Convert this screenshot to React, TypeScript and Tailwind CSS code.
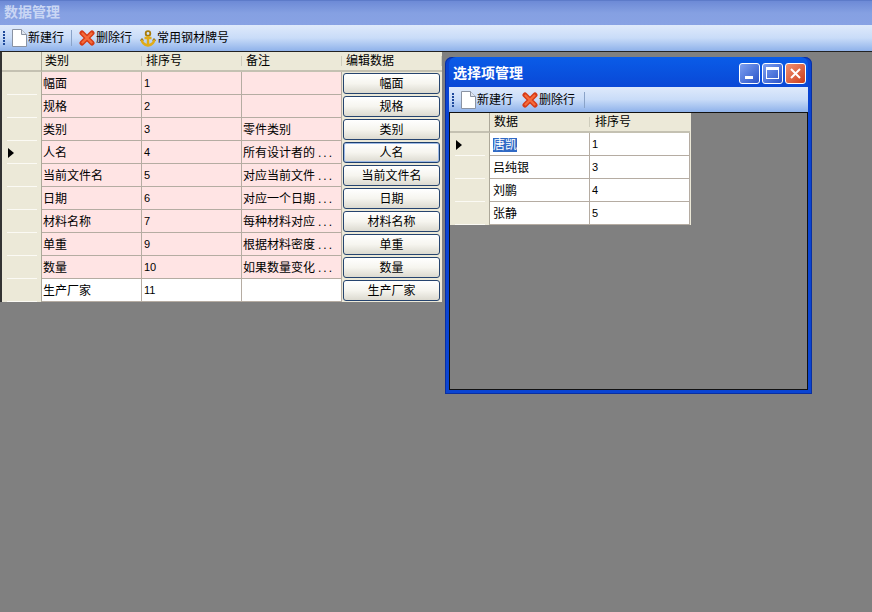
const FONT = "font-['Liberation_Sans','Noto_Sans_CJK_SC',sans-serif]";

const rows = [
  { name: "幅面", order: "1", note: "", pink: true },
  { name: "规格", order: "2", note: "", pink: true },
  { name: "类别", order: "3", note: "零件类别", pink: true },
  { name: "人名", order: "4", note: "所有设计者的", cut: true, pink: true, current: true },
  { name: "当前文件名", order: "5", note: "对应当前文件", cut: true, pink: true },
  { name: "日期", order: "6", note: "对应一个日期", cut: true, pink: true },
  { name: "材料名称", order: "7", note: "每种材料对应", cut: true, pink: true },
  { name: "单重", order: "9", note: "根据材料密度", cut: true, pink: true },
  { name: "数量", order: "10", note: "如果数量变化", cut: true, pink: true },
  { name: "生产厂家", order: "11", note: "", pink: false },
];

const options = [
  { name: "唐凯", order: "1", current: true },
  { name: "吕纯银", order: "3" },
  { name: "刘鹏", order: "4" },
  { name: "张静", order: "5" },
];

function NewIcon() {
  return (
    <svg width="15" height="18" viewBox="0 0 15 18" className="shrink-0">
      <path d="M0.5 0.5H9.5L14.5 5.5V17.5H0.5Z" fill="#fff" stroke="#8a93a3" />
      <path d="M9.5 0.5V5.5H14.5" fill="#dfe5ee" stroke="#8a93a3" />
    </svg>
  );
}

function DeleteIcon() {
  return (
    <svg width="16" height="16" viewBox="0 0 16 16" className="shrink-0">
      <path d="M3 3L13 13M13 3L3 13" stroke="#d63a16" strokeWidth="5" strokeLinecap="round" />
      <path d="M3.5 3.5L12.5 12.5M12.5 3.5L3.5 12.5" stroke="#f56a3a" strokeWidth="2.4" strokeLinecap="round" />
    </svg>
  );
}

function AnchorIcon() {
  return (
    <svg width="16" height="17" viewBox="0 0 16 17" fill="none" className="shrink-0">
      <circle cx="8" cy="3.5" r="2.3" stroke="#a87c08" strokeWidth="1.8" />
      <path d="M8 6V15M4.5 8H11.5" stroke="#e0ac18" strokeWidth="2.4" />
      <path d="M1.5 9.5C2 13 5 15 8 15.5C11 15 14 13 14.5 9.5" stroke="#e0ac18" strokeWidth="2.4" />
      <path d="M0.5 10.5L2 8.5L3.5 10.5M12.5 10.5L14 8.5L15.5 10.5" stroke="#8f6a08" />
    </svg>
  );
}

function Grip() {
  return (
    <div className="flex flex-col gap-[1px] w-[3px] shrink-0">
      {[0, 1, 2, 3, 4].map((i) => (
        <div key={i} className="w-[2px] h-[2px] bg-[#1f4a9c]" />
      ))}
    </div>
  );
}

function HeaderCell({ label, divider = true, className = "" }: { label: string; divider?: boolean; className?: string }) {
  return (
    <div className={`h-[20px] bg-[#ece9d8] border-b-2 border-[#c4c1b2] flex items-center relative ${className}`}>
      {label}
      {divider && <div className="absolute right-0 top-[4px] bottom-[4px] w-[1px] bg-[#cfcdbc]" />}
    </div>
  );
}

function RowHeader({ current }: { current?: boolean }) {
  return (
    <div className="h-[23px] bg-[#ece9d8] border-r border-[#aca899] flex items-center pl-[6px] relative">
      {current && <div className="w-0 h-0 border-y-[5px] border-y-transparent border-l-[6px] border-l-black" />}
      <div className="absolute left-[5px] right-[4px] bottom-0 h-[1px] bg-[#fbfaf4]" />
    </div>
  );
}

function Cell({ children, bg, digit }: { children?: React.ReactNode; bg: string; digit?: boolean }) {
  return (
    <div
      className={`h-[23px] ${bg} border-r border-b border-[#b5aca2] flex items-center pt-[1px] whitespace-nowrap overflow-hidden ${
        digit ? "pl-[2px] text-[11px]" : "pl-[1px]"
      }`}
    >
      {children}
    </div>
  );
}

function EditButton({ label, current }: { label: string; current?: boolean }) {
  return (
    <div className="h-[23px] bg-[#ece9d8] flex items-center justify-center pr-[1px]">
      <div
        className={`w-[97px] h-[21px] rounded-[3px] border flex items-center justify-center bg-gradient-to-b from-white via-[#f6f5ef] to-[#dcdad0] ${
          current ? "border-[#1c3f6e] shadow-[inset_0_0_0_1px_#9db8e4]" : "border-[#26446f]"
        }`}
      >
        {label}
      </div>
    </div>
  );
}

export default function App() {
  return (
    <div className={`${FONT} text-[12px] leading-none text-black w-[872px] h-[612px] bg-[#808080] relative overflow-hidden`}>
      {/* main title */}
      <div className="h-[25px] bg-gradient-to-b from-[#6d8ad6] via-[#85a0e2] to-[#88a2e4] border-t border-[#5d7bc9] flex items-center pl-[4px] pb-[2px] text-[14px] font-bold text-[#c9d6f4]">
        数据管理
      </div>

      {/* main toolbar */}
      <div className="h-[27px] bg-gradient-to-b from-[#dfeafb] via-[#c9dcf8] to-[#8fb2ea] border-b border-[#222] flex items-center pl-[3px]">
        <Grip />
        <div className="flex items-center ml-[6px]">
          <NewIcon />
          <span className="ml-[1px]">新建行</span>
        </div>
        <div className="w-[1px] h-[16px] bg-[#8aa3c8] ml-[7px] mr-[7px]" />
        <div className="flex items-center">
          <DeleteIcon />
          <span className="ml-[1px]">删除行</span>
        </div>
        <div className="flex items-center gap-[1px] ml-[8px]">
          <AnchorIcon />
          <span>常用钢材牌号</span>
        </div>
      </div>

      {/* main grid */}
      <div className="w-[442px] border-l-2 border-[#333] bg-[#ece9d8]">
        <div className="grid grid-cols-[40px_100px_100px_100px_100px]">
          <HeaderCell label="" divider={false} className="border-r border-r-[#aca899]" />
          <HeaderCell label="类别" className="pl-[3px]" />
          <HeaderCell label="排序号" className="pl-[4px]" />
          <HeaderCell label="备注" className="pl-[4px]" />
          <HeaderCell label="编辑数据" className="pl-[4px]" />
        </div>
        {rows.map((r) => {
          const bg = r.pink ? "bg-[#ffe4e4]" : "bg-white";
          return (
            <div key={r.name} className="grid grid-cols-[40px_100px_100px_100px_100px]">
              <RowHeader current={r.current} />
              <Cell bg={bg}>{r.name}</Cell>
              <Cell bg={bg} digit>{r.order}</Cell>
              <Cell bg={bg}>
                {r.note}
                {r.cut && <span className="ml-[3px] tracking-[2px]">...</span>}
              </Cell>
              <EditButton label={r.name} current={r.current} />
            </div>
          );
        })}
      </div>

      {/* child window */}
      <div className="absolute left-[445px] top-[57px] w-[367px] h-[337px] rounded-t-[7px] bg-[#0a44d2] shadow-[inset_0_0_0_1px_#0a2fa0] px-[4px] pb-[4px] flex flex-col">
        <div className="h-[30px] shrink-0 flex items-center justify-between pl-[4px] pr-[2px] rounded-t-[7px] bg-gradient-to-b from-[#0a5ce8] to-[#0a48d6]">
          <span className="text-[14px] font-bold text-white pt-[1px]">选择项管理</span>
          <div className="flex gap-[2px] mt-[2px]">
            <div className="w-[21px] h-[21px] rounded-[3px] border border-white bg-gradient-to-br from-[#7f9ff0] to-[#2b52c8] flex items-end pl-[5px] pb-[4px]">
              <div className="w-[8px] h-[3px] bg-white" />
            </div>
            <div className="w-[21px] h-[21px] rounded-[3px] border border-white bg-gradient-to-br from-[#7f9ff0] to-[#2b52c8] flex items-center justify-center">
              <div className="w-[13px] h-[12px] border border-white border-t-[3px]" />
            </div>
            <div className="w-[21px] h-[21px] rounded-[3px] border border-white bg-gradient-to-br from-[#f09070] to-[#cc3a14] flex items-center justify-center">
              <svg width="13" height="13" viewBox="0 0 13 13">
                <path d="M2 2L11 11M11 2L2 11" stroke="#fff" strokeWidth="2" />
              </svg>
            </div>
          </div>
        </div>
        <div className="h-[26px] shrink-0 bg-gradient-to-b from-[#dfeafb] via-[#c9dcf8] to-[#8fb2ea] border-b border-[#111] flex items-center pl-[3px]">
          <Grip />
          <div className="flex items-center ml-[6px]">
            <NewIcon />
            <span className="ml-[1px]">新建行</span>
          </div>
          <div className="flex items-center ml-[9px]">
            <DeleteIcon />
            <span className="ml-[1px]">删除行</span>
          </div>
          <div className="w-[1px] h-[16px] bg-[#8aa3c8] ml-[9px]" />
        </div>
        <div className="flex-1 bg-[#808080] border-x border-b border-[#111]">
          <div className="w-[241px] bg-[#ece9d8]">
            <div className="grid grid-cols-[40px_100px_100px]">
              <HeaderCell label="" divider={false} className="border-r border-r-[#aca899]" />
              <HeaderCell label="数据" className="pl-[4px]" />
              <HeaderCell label="排序号" divider={false} className="pl-[5px]" />
            </div>
            {options.map((o) => (
              <div key={o.name} className="grid grid-cols-[40px_100px_100px]">
                <RowHeader current={o.current} />
                <Cell bg="bg-white">
                  {o.current ? <span className="bg-[#316ac5] text-white ml-[2px] py-[1px]">{o.name}</span> : <span className="ml-[2px]">{o.name}</span>}
                </Cell>
                <Cell bg="bg-white" digit>{o.order}</Cell>
              </div>
            ))}
          </div>
        </div>
      </div>
    </div>
  );
}
